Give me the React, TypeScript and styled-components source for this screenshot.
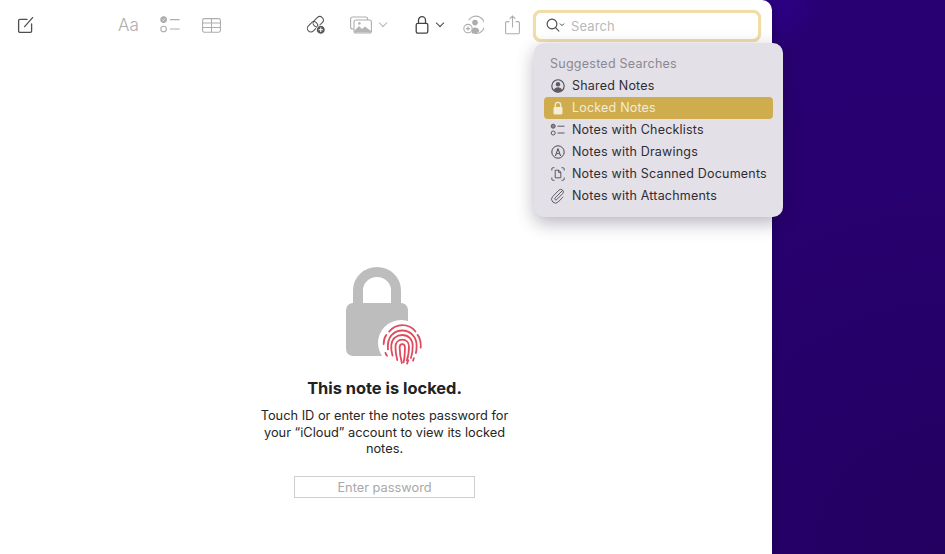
import styled, { createGlobalStyle } from 'styled-components';

const GlobalStyle = createGlobalStyle`
  html, body {
    margin: 0;
    padding: 0;
    height: 100%;
    overflow: hidden;
    font-family: Inter, 'Liberation Sans', sans-serif;
  }
  #root {
    height: 100%;
  }
`;

const suggestions = [
  { label: 'Shared Notes', icon: 'shared' },
  { label: 'Locked Notes', icon: 'lock', active: true },
  { label: 'Notes with Checklists', icon: 'checklist' },
  { label: 'Notes with Drawings', icon: 'drawing' },
  { label: 'Notes with Scanned Documents', icon: 'scan' },
  { label: 'Notes with Attachments', icon: 'clip' },
];

function MenuIcon({ name }: { name: string }) {
  if (name === 'shared') {
    return (
      <svg width="16" height="16" viewBox="0 0 16 16" fill="none" stroke="#4a4850" strokeWidth="1.1">
        <circle cx="8" cy="8" r="6.2" />
        <circle cx="8" cy="6.2" r="2.2" fill="#5d5b62" stroke="none" />
        <path d="M3.8 12.2c.8-2 2.4-2.9 4.2-2.9s3.4.9 4.2 2.9c-1.1 1.2-2.6 2-4.2 2s-3.1-.8-4.2-2z" fill="#5d5b62" stroke="none" />
      </svg>
    );
  }
  if (name === 'lock') {
    return (
      <svg width="16" height="16" viewBox="0 0 16 16" fill="none">
        <rect x="3.500" y="7" width="9" height="7.500" rx="1.400" fill="#f3ecd6" />
        <path d="M5.300 7.500V5a2.700 2.700 0 0 1 5.400 0v2.500" stroke="#f3ecd6" strokeWidth="1.300" />
      </svg>
    );
  }
  if (name === 'checklist') {
    return (
      <svg width="16" height="16" viewBox="0 0 16 16" fill="none" stroke="#5a5860" strokeWidth="1">
        <circle cx="3.200" cy="4.200" r="2" fill="#8a888f" />
        <circle cx="3.200" cy="11" r="2" />
        <path d="M7.500 4.200h7M7.500 11h7" />
      </svg>
    );
  }
  if (name === 'drawing') {
    return (
      <svg width="16" height="16" viewBox="0 0 16 16" fill="none" stroke="#4a4850" strokeWidth="1">
        <circle cx="8" cy="8" r="6.200" />
        <path d="M5.400 12 8 4.600l2.600 7.400M6.600 10.200c.8-1 2-1 2.800 0" />
      </svg>
    );
  }
  if (name === 'scan') {
    return (
      <svg width="16" height="16" viewBox="0 0 16 16" fill="none" stroke="#5a5860" strokeWidth="1">
        <path d="M1.800 4.500V3A1.300 1.300 0 0 1 3.100 1.700h1.400M11.500 1.700h1.400A1.300 1.300 0 0 1 14.200 3v1.500M14.200 11.500V13a1.300 1.300 0 0 1-1.300 1.300h-1.400M4.500 14.300H3.100A1.300 1.300 0 0 1 1.800 13v-1.500" />
        <path d="M5.200 4.200h3.600l2 2v5.600H5.200zM8.600 4.200v2.200h2.200" />
      </svg>
    );
  }
  return (
    <svg width="16" height="16" viewBox="0 0 16 16" fill="none" stroke="#5a5860" strokeWidth="1">
      <path d="M13.600 3.400 5.900 11.200a1.200 1.200 0 0 0 1.700 1.700l6-6.100a2.600 2.600 0 0 0-3.700-3.700l-6.600 6.700a4 4 0 0 0 5.700 5.600l5.300-5.400" transform="translate(-.6 -.9) scale(.97)" />
    </svg>
  );
}

function Fingerprint() {
  return (
    <svg width="43" height="43" viewBox="0.5 1.500 36 36" fill="none" stroke="#df4a5e" strokeWidth="1.500" strokeLinecap="round">
      <path d="M9 9.500C12 6 15.800 4.200 20 4.200s8.400 1.900 11 5.200" />
      <path d="M4.400 20c0-3 .7-5.600 2.200-7.600M35.400 23c.3-4-.4-7.700-2.600-10.700" />
      <path d="M8 24.500c-.4-4.500-.2-8.500 3-12 2.400-2.500 5.600-3.900 9-3.900 6.800 0 12 5.400 12 12.500 0 2-.1 4.300-.6 6.400" />
      <path d="M11.800 29.600c-.8-3-1.300-6-1-9 .5-5.200 4.300-8.200 9.200-8.200 5 0 8.600 3.600 8.700 8.800.1 3.600-.3 7-1.500 10.400" />
      <path d="M15.800 33.400c-1-3.600-1.600-7.500-1.500-11.200.1-3.600 2.400-6 5.700-6 3.400 0 5.600 2.400 5.600 5.800 0 4-.4 8-1.900 11.800" />
      <path d="M19.600 35.800c-1-4-1.800-8.500-1.800-13 0-1.600.8-2.800 2.200-2.800s2.200 1.200 2.200 2.800c0 4.200-.2 8.400-1.100 12.400" />
      <path d="M7.200 29.800c-.6-.8-1-1.600-1.300-2.400M24 36.400c.4-1 .7-1.900 1-2.900M29 33.800l.7-2" />
    </svg>
  );
}

export default function App() {
  return (
    <>
      <GlobalStyle />
      <Desktop>
        <NotesWindow>
          <Toolbar>
            <ToolIcon $left={17} $size={18}>
              <svg width="18" height="18" viewBox="0 0 18 18" fill="none" stroke="#4e4e4e" strokeWidth="1.300" strokeLinecap="round">
                <path d="M10 3.400H3a1.400 1.400 0 0 0-1.400 1.400V15A1.400 1.400 0 0 0 3 16.400h10.200a1.400 1.400 0 0 0 1.400-1.400V8" />
                <path d="M7.600 10.600 15.600 1.600" />
              </svg>
            </ToolIcon>
            <TextTool $left={83}>Aa</TextTool>
            <ToolIcon $left={20} $size={20}>
              <svg width="20" height="20" viewBox="0 0 20 20" fill="none" stroke="#adadad" strokeWidth="1.100">
                <circle cx="3.600" cy="4.600" r="2.800" fill="#adadad" />
                <path d="M2.300 4.600l1 1 1.700-2" stroke="#fff" strokeWidth=".8" />
                <circle cx="3.600" cy="14" r="2.800" />
                <path d="M10 4.600h9.600M10 14h9.600" />
              </svg>
            </ToolIcon>
            <ToolIcon $left={22} $size={19}>
              <svg width="19" height="19" viewBox="0 0 19 19" fill="none" stroke="#adadad" strokeWidth="1.100">
                <rect x=".6" y="2.600" width="17.800" height="13.600" rx="1.600" />
                <path d="M.6 7h17.800M.6 11.500h17.800M9.500 2.600v13.600" />
              </svg>
            </ToolIcon>
            <ToolIcon $left={85} $size={20}>
              <svg width="21" height="20" viewBox="0 0 21 20" fill="none" stroke="#555" strokeWidth="1.100">
                <rect x=".8" y="8.200" width="12" height="7.500" rx="3.750" transform="rotate(-45 6.800 12)" />
                <rect x="6.800" y="2.800" width="12" height="7.500" rx="3.750" transform="rotate(-45 12.800 6.500)" />
                <circle cx="15.500" cy="15" r="4.600" fill="#555" stroke="#fff" strokeWidth="1" />
                <path d="M15.500 12.700v4.600M13.200 15h4.600" stroke="#fff" strokeWidth="1.200" />
              </svg>
            </ToolIcon>
            <ToolIcon $left={24} $size={22}>
              <svg width="22" height="20" viewBox="0 0 22 20" fill="none" stroke="#adadad" strokeWidth="1.100">
                <rect x=".6" y="2" width="17" height="12" rx="2" />
                <rect x="4" y="5" width="17.400" height="13" rx="2" fill="#fff" />
                <path d="M4.500 17.600v-2.200L9 11l3 3 3-2.500 6 4.500v1.500z" fill="#b5b5b5" stroke="none" />
                <circle cx="9.400" cy="8.400" r="1.300" fill="#b5b5b5" stroke="none" />
              </svg>
            </ToolIcon>
            <Caret $left={8} $color="#b5b5b5" />
            <ToolIcon $left={29} $size={14}>
              <svg width="14" height="20" viewBox="0 0 14 20" fill="none" stroke="#444" strokeWidth="1.300">
                <rect x="1.200" y="8.400" width="11.600" height="9.800" rx="1.600" />
                <path d="M3.500 8.400V5.200a3.500 3.500 0 0 1 7 0v3.200" />
              </svg>
            </ToolIcon>
            <Caret $left={8} $color="#444" />
            <ToolIcon $left={20} $size={21}>
              <svg width="21" height="20" viewBox="0 0 21 20" fill="none" stroke="#adadad" strokeWidth="1.100">
                <path d="M5.600 5.200A8.700 8.700 0 1 1 11.500 18.400" />
                <circle cx="12" cy="7.600" r="2.800" fill="#adadad" stroke="none" />
                <path d="M8.600 16.800c.4-3 1.400-4.400 3.400-4.400s3.800 1.100 4.400 3.500a7.800 7.800 0 0 1-4.400 2.500H9z" fill="#adadad" stroke="none" />
                <circle cx="5" cy="13.600" r="4.200" fill="#fff" />
                <path d="M5 11.400v4.400M2.800 13.600h4.400" />
              </svg>
            </ToolIcon>
            <ToolIcon $left={21} $size={15}>
              <svg width="15" height="20" viewBox="0 0 15 20" fill="none" stroke="#adadad" strokeWidth="1.100">
                <path d="M4.400 6.600H2a1.400 1.400 0 0 0-1.400 1.400v9.400A1.400 1.400 0 0 0 2 18.800h11a1.400 1.400 0 0 0 1.400-1.400V8A1.400 1.400 0 0 0 13 6.600h-2.400" />
                <path d="M7.500 12.600V1M4.600 3.800 7.500 1l2.900 2.800" />
              </svg>
            </ToolIcon>
            <SearchField>
              <svg width="19" height="15" viewBox="0 0 19 15" fill="none" stroke="#444" strokeWidth="1.100">
                <circle cx="6" cy="6" r="4.900" />
                <path d="M9.600 9.600l3.600 3.900" />
                <path d="M14 5.600l2 2 2-2" strokeWidth="1" />
              </svg>
              <SearchText>Search</SearchText>
            </SearchField>
          </Toolbar>
          <LockedContent>
            <LockArt>
              <svg width="62" height="90" viewBox="0 0 62 90" fill="none">
                <path d="M12 40V23a19 18 0 0 1 38 0V40" stroke="#bdbdbd" strokeWidth="10" />
                <rect x="0" y="36" width="62" height="53" rx="7" fill="#bdbdbd" />
              </svg>
              <FingerBadge>
                <Fingerprint />
              </FingerBadge>
            </LockArt>
            <Heading>This note is locked.</Heading>
            <Message>
              Touch ID or enter the notes password for your “iCloud” account to view its locked notes.
            </Message>
            <PasswordBox>Enter password</PasswordBox>
          </LockedContent>
        </NotesWindow>
        <SearchMenu>
          <MenuTitle>Suggested Searches</MenuTitle>
          {suggestions.map((item) => (
            <MenuRow key={item.label} $active={item.active}>
              <MenuIconSlot>
                <MenuIcon name={item.icon} />
              </MenuIconSlot>
              {item.label}
            </MenuRow>
          ))}
        </SearchMenu>
      </Desktop>
    </>
  );
}

const Desktop = styled.div`
  position: relative;
  display: flex;
  width: 945px;
  height: 554px;
  overflow: hidden;
  background:
    radial-gradient(circle at 775px 0, rgba(50, 0, 160, 0.45) 0, rgba(50, 0, 160, 0) 50px),
    radial-gradient(circle at 100% 100%, #230060 0%, #280070 35%, #2a0078 100%);
`;

const NotesWindow = styled.div`
  display: flex;
  flex-direction: column;
  width: 772px;
  height: 100%;
  background: #fff;
  border-top-right-radius: 10px;
  box-shadow: 1px 0 8px rgba(10, 0, 40, 0.3);
`;

const Toolbar = styled.div`
  display: flex;
  align-items: center;
  height: 50px;
  flex-shrink: 0;
`;

const ToolIcon = styled.div<{ $left: number; $size: number }>`
  display: flex;
  align-items: center;
  justify-content: center;
  margin-left: ${(p) => p.$left}px;
  width: ${(p) => p.$size}px;
  height: 20px;
`;

const TextTool = styled.div<{ $left: number }>`
  margin-left: ${(p) => p.$left}px;
  width: 22px;
  font-size: 17px;
  font-weight: 300;
  color: #adadad;
`;

const Caret = styled.span<{ $left: number; $color: string }>`
  display: block;
  flex-shrink: 0;
  margin-left: ${(p) => p.$left}px;
  margin-right: 0;
  margin-top: -4px;
  width: 5px;
  height: 5px;
  border-right: 1.5px solid ${(p) => p.$color};
  border-bottom: 1.5px solid ${(p) => p.$color};
  transform: rotate(45deg);
`;

const SearchField = styled.div`
  display: flex;
  align-items: center;
  gap: 6px;
  box-sizing: border-box;
  flex-shrink: 0;
  margin-left: 13px;
  margin-top: 1px;
  width: 228px;
  height: 32px;
  padding-left: 10px;
  background: #fff;
  border: 3px solid #f0dda8;
  border-radius: 8px;
  box-shadow: 0 0 1px #f0dda8;
`;

const SearchText = styled.span`
  font-size: 13px;
  color: #b9b9b9;
  letter-spacing: 0.1px;
`;

const LockedContent = styled.div`
  display: flex;
  flex-direction: column;
  align-items: center;
  padding-top: 217px;
  padding-right: 3px;
`;

const LockArt = styled.div`
  position: relative;
  display: flex;
  width: 62px;
  height: 90px;
  margin-left: -16px;
`;

const FingerBadge = styled.div`
  position: absolute;
  left: 32px;
  top: 53px;
  display: flex;
  align-items: center;
  justify-content: center;
  width: 46px;
  height: 46px;
  border-radius: 50%;
  background: #fff;
`;

const Heading = styled.h1`
  margin: 21px 0 0;
  font-size: 16.4px;
  line-height: 20px;
  font-weight: 700;
  color: #222;
`;

const Message = styled.p`
  margin: 10px 0 0;
  width: 260px;
  font-size: 12.8px;
  line-height: 16.5px;
  color: #262626;
  text-align: center;
`;

const PasswordBox = styled.div`
  box-sizing: border-box;
  margin-top: 18px;
  width: 181px;
  height: 22px;
  border: 1px solid #cfcfcf;
  font-size: 12.8px;
  line-height: 21px;
  color: #a8a8a8;
  text-align: center;
`;

const SearchMenu = styled.div`
  position: absolute;
  left: 534px;
  top: 43px;
  box-sizing: border-box;
  width: 249px;
  height: 174px;
  padding: 10px 10px 0;
  background: #e4e0e8;
  border-radius: 10px;
  box-shadow: 0 6px 18px rgba(20, 10, 40, 0.3);
`;

const MenuTitle = styled.div`
  height: 22px;
  padding-left: 6px;
  font-size: 12.5px;
  line-height: 21px;
  letter-spacing: 0.25px;
  color: #8b8891;
`;

const MenuRow = styled.div<{ $active?: boolean }>`
  display: flex;
  align-items: center;
  box-sizing: border-box;
  height: 22px;
  padding: 0 0 1px 6px;
  font-size: 12.5px;
  letter-spacing: 0.2px;
  white-space: nowrap;
  border-radius: 4px;
  color: ${(p) => (p.$active ? '#f3ecd6' : '#2f2d33')};
  background: ${(p) => (p.$active ? '#cfad4e' : 'transparent')};
`;

const MenuIconSlot = styled.span`
  display: flex;
  align-items: center;
  justify-content: center;
  width: 16px;
  margin-right: 6px;
`;
